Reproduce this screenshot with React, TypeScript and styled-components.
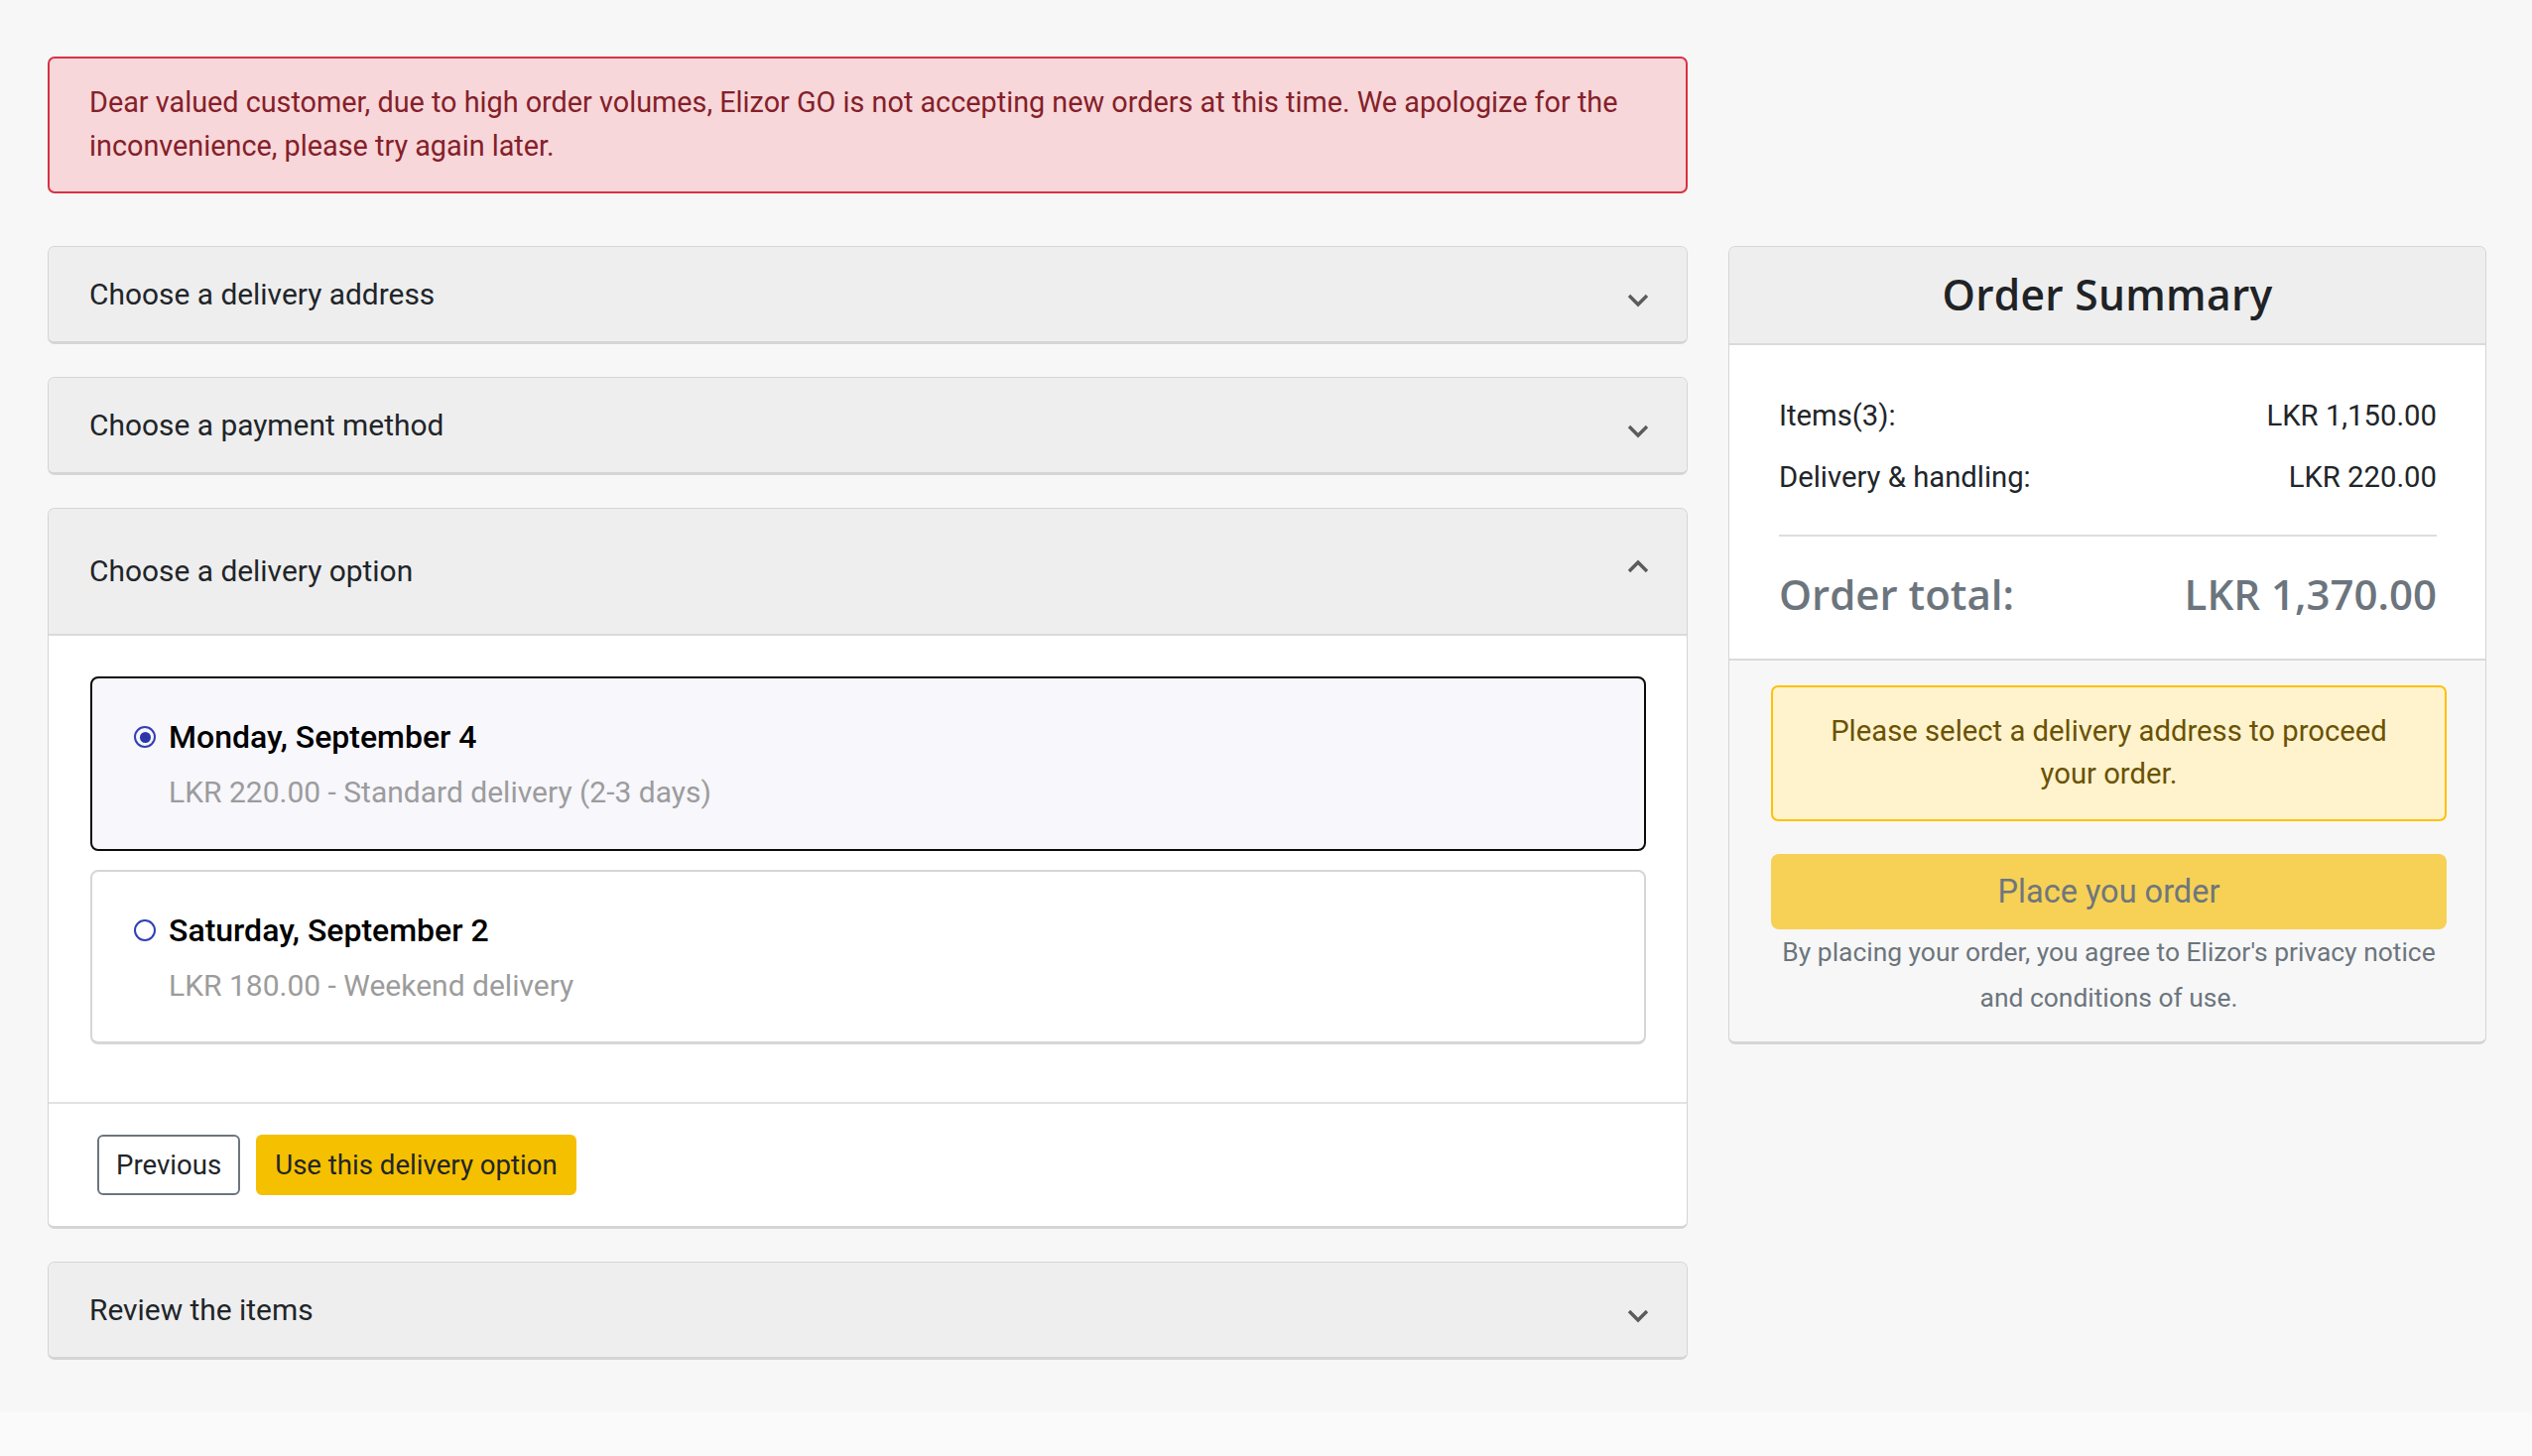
import React from "react";
import styled, { createGlobalStyle } from "styled-components";

const GlobalStyle = createGlobalStyle`
  html, body {
    margin: 0;
    padding: 0;
    background: #fafafa;
  }
  body {
    font-family: Roboto, "Liberation Sans", Arial, sans-serif;
    font-size: 29.25px;
    line-height: 1.5;
    color: #212529;
  }
  * { box-sizing: border-box; }
`;

const Page = styled.div`
  background: #f7f7f7;
  padding: 57px 46px 53px 48px;
  display: grid;
  grid-template-columns: 1653px 764px;
  column-gap: 41px;
  row-gap: 53px;
  align-items: start;
`;

const Alert = styled.div`
  grid-column: 1;
  background: #f8d7da;
  border: 2px solid #d63343;
  border-radius: 7px;
  color: #842029;
  font-size: 28.8px;
  padding: 22px 40px 24px 40px;
  line-height: 44px;
`;

const Steps = styled.div`
  grid-column: 1;
  display: flex;
  flex-direction: column;
  gap: 33px;
`;

const Item = styled.section`
  border: 1px solid #d5d5d5;
  border-bottom-width: 3px;
  border-radius: 7px;
  overflow: hidden;
  background: #eeeeee;
`;

const Header = styled.div<{ $open?: boolean }>`
  display: flex;
  align-items: center;
  justify-content: space-between;
  padding: ${(p) => (p.$open ? "41px" : "25.5px")} 38px
    ${(p) => (p.$open ? "41px" : "25.5px")} 41px;
  font-size: 29.9px;
  line-height: 44px;
  color: #212529;
  background: #eeeeee;
  border-bottom: ${(p) => (p.$open ? "2px solid #dadada" : "none")};
`;

const Chevron = styled.svg<{ $up?: boolean }>`
  width: 22px;
  height: 14px;
  flex: none;
  margin-top: ${(p) => (p.$up ? "-10px" : "12px")};
`;

const Body = styled.div`
  background: #ffffff;
  padding: 41px 41px 58px 42px;
  display: flex;
  flex-direction: column;
  gap: 19px;
`;

const Option = styled.label<{ $selected?: boolean }>`
  display: block;
  height: 176px;
  border-radius: 8px;
  border: 2px solid ${(p) => (p.$selected ? "#0b0b0b" : "#d6d6d6")};
  border-bottom-width: ${(p) => (p.$selected ? "2px" : "3px")};
  background: ${(p) => (p.$selected ? "#f7f7fc" : "#ffffff")};
  padding: 40px 42px 0 42px;
`;

const OptionTitle = styled.div`
  display: flex;
  align-items: center;
  gap: 13px;
  font-size: 32px;
  font-weight: 500;
  line-height: 38px;
  color: #000;
`;

const Radio = styled.span<{ $checked?: boolean }>`
  width: 22px;
  height: 22px;
  flex: none;
  border-radius: 50%;
  border: 2px solid #3140b4;
  display: flex;
  align-items: center;
  justify-content: center;
  &::after {
    content: "";
    width: 11px;
    height: 11px;
    border-radius: 50%;
    background: ${(p) => (p.$checked ? "#2b37a8" : "transparent")};
  }
`;

const OptionSub = styled.div`
  margin-top: 17px;
  padding-left: 35px;
  color: #9c9c9c;
  font-size: 30px;
  line-height: 40px;
`;

const Footer = styled.div`
  background: #ffffff;
  border-top: 2px solid #e2e2e2;
  padding: 31px 42px 31px 49px;
  display: flex;
  gap: 16px;
`;

const Button = styled.button<{ $variant: "outline" | "warning" }>`
  height: 61px;
  padding: 0 17px;
  font-family: inherit;
  font-size: 27.6px;
  line-height: 1;
  border-radius: 6px;
  color: #212529;
  cursor: pointer;
  border: 2px solid ${(p) => (p.$variant === "outline" ? "#6c757d" : "#f5c000")};
  background: ${(p) => (p.$variant === "outline" ? "#ffffff" : "#f5c000")};
`;

const Summary = styled.aside`
  grid-column: 2;
  border: 1px solid #d5d5d5;
  border-bottom-width: 3px;
  border-radius: 7px;
  overflow: hidden;
  background: #f7f7f7;
`;

const SummaryHeader = styled.div`
  background: #eeeeee;
  border-bottom: 2px solid #dadada;
  height: 99px;
  display: flex;
  align-items: center;
  justify-content: center;
`;

const SummaryTitle = styled.h2`
  margin: 0;
  font-family: "Open Sans", "DejaVu Sans", sans-serif;
  font-weight: 600;
  font-size: 42.5px;
  letter-spacing: 0.3px;
  color: #1f2326;
  line-height: 1;
`;

const SummaryBody = styled.div`
  background: #ffffff;
  border-bottom: 2px solid #dadada;
  padding: 49px 49px 37px 50px;
`;

const Row = styled.div`
  display: flex;
  justify-content: space-between;
  line-height: 44px;
  & + & {
    margin-top: 18px;
  }
`;

const Divider = styled.hr`
  border: none;
  border-top: 2px solid #dddddd;
  margin: 36px 0 30px;
`;

const TotalRow = styled.div`
  display: flex;
  justify-content: space-between;
  font-family: "Open Sans", "DejaVu Sans", sans-serif;
  font-weight: 600;
  font-size: 42px;
  line-height: 56px;
  color: #6c757d;
`;

const SummaryFooter = styled.div`
  padding: 25px 39px 21px 42px;
  display: flex;
  flex-direction: column;
`;

const Warning = styled.div`
  background: #fff3cd;
  border: 2px solid #ffc107;
  border-radius: 7px;
  color: #6a5204;
  text-align: center;
  line-height: 43px;
  padding: 23px 40px 24px;
`;

const PlaceButton = styled.button`
  margin-top: 33px;
  height: 76px;
  width: 100%;
  border: none;
  border-radius: 8px;
  background: #f6d155;
  color: #6f767e;
  font-family: inherit;
  font-size: 32.5px;
  cursor: default;
`;

const FinePrint = styled.p`
  margin: 0;
  text-align: center;
  color: #6c757d;
  font-size: 26.4px;
  line-height: 46px;
`;

const ChevronIcon = ({ up }: { up?: boolean }) => (
  <Chevron $up={up} viewBox="0 0 22 14">
    <polyline
      points={up ? "2,12 11,3 20,12" : "2,2 11,11 20,2"}
      fill="none"
      stroke="#5b5b5b"
      strokeWidth="3.4"
    />
  </Chevron>
);

const ClosedStep = ({ title }: { title: string }) => (
  <Item>
    <Header>
      <span>{title}</span>
      <ChevronIcon />
    </Header>
  </Item>
);

const options = [
  { day: "Monday, September 4", desc: "LKR 220.00 - Standard delivery (2-3 days)", selected: true },
  { day: "Saturday, September 2", desc: "LKR 180.00 - Weekend delivery", selected: false },
];

export default function App() {
  return (
    <>
      <GlobalStyle />
      <Page>
        <Alert>
          Dear valued customer, due to high order volumes, Elizor GO is not accepting new orders at
          this time. We apologize for the inconvenience, please try again later.
        </Alert>
        <Steps>
          <ClosedStep title="Choose a delivery address" />
          <ClosedStep title="Choose a payment method" />
          <Item>
            <Header $open>
              <span>Choose a delivery option</span>
              <ChevronIcon up />
            </Header>
            <Body>
              {options.map((o) => (
                <Option key={o.day} $selected={o.selected}>
                  <OptionTitle>
                    <Radio $checked={o.selected} />
                    {o.day}
                  </OptionTitle>
                  <OptionSub>{o.desc}</OptionSub>
                </Option>
              ))}
            </Body>
            <Footer>
              <Button $variant="outline">Previous</Button>
              <Button $variant="warning">Use this delivery option</Button>
            </Footer>
          </Item>
          <ClosedStep title="Review the items" />
        </Steps>
        <Summary>
          <SummaryHeader>
            <SummaryTitle>Order Summary</SummaryTitle>
          </SummaryHeader>
          <SummaryBody>
            <Row>
              <span>Items(3):</span>
              <span>LKR 1,150.00</span>
            </Row>
            <Row>
              <span>Delivery &amp; handling:</span>
              <span>LKR 220.00</span>
            </Row>
            <Divider />
            <TotalRow>
              <span>Order total:</span>
              <span>LKR 1,370.00</span>
            </TotalRow>
          </SummaryBody>
          <SummaryFooter>
            <Warning>Please select a delivery address to proceed your order.</Warning>
            <PlaceButton disabled>Place you order</PlaceButton>
            <FinePrint>
              By placing your order, you agree to Elizor's privacy notice and conditions of use.
            </FinePrint>
          </SummaryFooter>
        </Summary>
      </Page>
    </>
  );
}
